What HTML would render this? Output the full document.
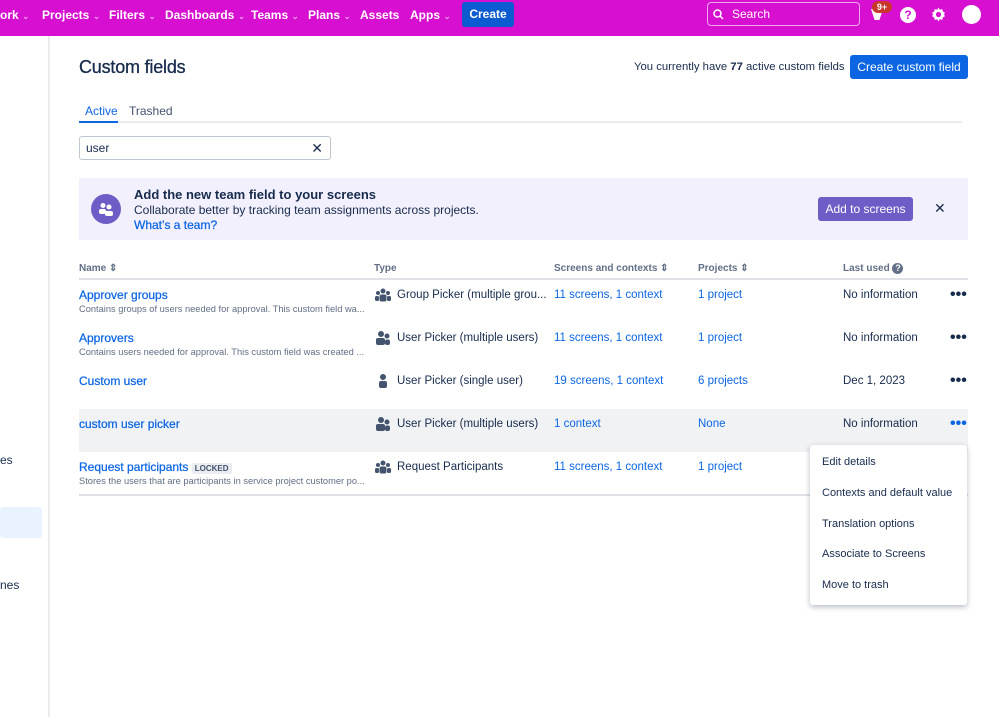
<!DOCTYPE html>
<html><head><meta charset="utf-8"><style>
*{box-sizing:border-box;margin:0;padding:0}
body{width:999px;height:717px;overflow:hidden;background:#fff;font-family:"Liberation Sans",sans-serif;color:#172b4d;font-size:12px;position:relative}
.top{position:absolute;left:0;top:0;width:999px;height:36px;background:#d60fd0}
.nav{position:absolute;top:8px;color:#fff;font-weight:bold;font-size:12px}
.nav span{font-weight:normal;font-size:9px;opacity:.8}
.ab{position:absolute}
.row{position:absolute;left:79px;width:889px;height:43px;font-size:11.5px}
.row .n{position:absolute;left:0;top:8px;color:#0c66e4;font-size:12px;-webkit-text-stroke:.25px #0c66e4}
.row .d{position:absolute;left:0;top:24px;color:#626f86;font-size:9.3px;white-space:nowrap}
.row .t{position:absolute;left:318px;top:9px}
.row .s{position:absolute;left:475px;top:9px;color:#0c66e4}
.row .p{position:absolute;left:619px;top:9px;color:#0c66e4}
.row .l{position:absolute;left:764px;top:9px}
.row .m{position:absolute;left:871px;top:6px;font-size:16px;font-weight:bold}
.ic{position:absolute;left:296px;top:8px;width:16px;height:14px}
.menu{position:absolute;left:810px;top:445px;width:157px;height:160px;background:#fff;box-shadow:0 2px 6px rgba(9,30,66,.3);border-radius:3px}
.menu div{position:absolute;left:12px;font-size:11px}
</style></head><body>
<div class="top">
<div class="nav" style="left:0">ork <span>⌄</span></div>
<div class="nav" style="left:42px">Projects <span>⌄</span></div>
<div class="nav" style="left:109px">Filters <span>⌄</span></div>
<div class="nav" style="left:165px">Dashboards <span>⌄</span></div>
<div class="nav" style="left:251px">Teams <span>⌄</span></div>
<div class="nav" style="left:308px">Plans <span>⌄</span></div>
<div class="nav" style="left:360px">Assets</div>
<div class="nav" style="left:410px">Apps <span>⌄</span></div>
<div class="ab" style="left:462px;top:2px;width:52px;height:25px;background:#0c5bd1;border-radius:3px;color:#fff;font-weight:bold;text-align:center;line-height:25px">Create</div>
<div class="ab" style="left:707px;top:2px;width:153px;height:24px;border:1.5px solid #f0a8ee;border-radius:4px;color:#fff;line-height:22px;padding-left:24px">Search</div>
<svg class="ab" style="left:713px;top:9px" width="11" height="11"><circle cx="4.5" cy="4.5" r="3.5" stroke="#fff" stroke-width="1.5" fill="none"/><path d="M7 7l3 3" stroke="#fff" stroke-width="1.5"/></svg>
<div class="ab" style="left:871px;top:9px;width:12px;height:11px;background:#fff;clip-path:polygon(0 0,100% 0,70% 100%,30% 100%)"></div>
<div class="ab" style="left:872px;top:1px;width:20px;height:12px;background:#c9372c;border-radius:6px;color:#fff;font-size:9px;font-weight:bold;text-align:center;line-height:12px">9+</div>
<div class="ab" style="left:900px;top:7px;width:16px;height:16px;border-radius:50%;background:#fff;color:#d60fd0;font-weight:bold;text-align:center;line-height:16px;font-size:12px">?</div>
<svg class="ab" style="left:930px;top:6px" width="17" height="17" viewBox="0 0 17 17"><path d="M8.5 1.5l1.3 2.2 2.5-.6.6 2.5 2.2 1.3-1.3 1.6 1.3 1.6-2.2 1.3-.6 2.5-2.5-.6-1.3 2.2-1.3-2.2-2.5.6-.6-2.5-2.2-1.3 1.3-1.6-1.3-1.6 2.2-1.3.6-2.5 2.5.6z" fill="#fff"/><circle cx="8.5" cy="8.5" r="2.6" fill="#d60fd0"/></svg>
<div class="ab" style="left:962px;top:5px;width:19px;height:19px;border-radius:50%;background:#fff"></div>
</div>
<div class="ab" style="left:48px;top:36px;width:2px;height:681px;background:#ebecf0"></div>
<div class="ab" style="left:0;top:453px">es</div>
<div class="ab" style="left:0;top:507px;width:42px;height:31px;background:#e9f2ff;border-radius:3px"></div>
<div class="ab" style="left:0;top:578px">nes</div>

<div class="ab" style="left:79px;top:57px;font-size:18px;letter-spacing:-.2px;-webkit-text-stroke:.3px #172b4d">Custom fields</div>
<div class="ab" style="left:634px;top:61px;font-size:11.3px">You currently have <b>77</b> active custom fields</div>
<div class="ab" style="left:850px;top:55px;width:118px;height:24px;background:#0c66e4;color:#fff;border-radius:3px;text-align:center;line-height:24px">Create custom field</div>
<div class="ab" style="left:85px;top:104px;color:#0c66e4">Active</div>
<div class="ab" style="left:129px;top:104px;color:#44546f">Trashed</div>
<div class="ab" style="left:79px;top:121px;width:883px;height:2px;background:#ebecf0"></div>
<div class="ab" style="left:79px;top:121px;width:39px;height:2px;background:#0c66e4"></div>
<div class="ab" style="left:79px;top:136px;width:252px;height:24px;border:1.5px solid #c1c7d0;border-radius:3px;padding-left:6px;line-height:22px">user<span style="position:absolute;right:7px;font-size:14px">✕</span></div>

<div class="ab" style="left:79px;top:178px;width:889px;height:62px;background:#f2f0fd"></div>
<div class="ab" style="left:91px;top:194px;width:30px;height:30px;border-radius:50%;background:#6e5dc6"></div>
<svg class="ab" style="left:98px;top:202px" width="16" height="14"><circle cx="5" cy="3.5" r="2.5" fill="#fff"/><circle cx="11" cy="5" r="2.5" fill="#fff"/><rect x="1" y="7" width="7" height="5" rx="2" fill="#fff"/><rect x="7" y="9" width="8" height="5" rx="2" fill="#fff"/></svg>
<div class="ab" style="left:134px;top:187px;font-size:13px;font-weight:bold">Add the new team field to your screens</div>
<div class="ab" style="left:134px;top:203px">Collaborate better by tracking team assignments across projects.</div>
<div class="ab" style="left:134px;top:218px;color:#0c66e4;-webkit-text-stroke:.25px #0c66e4">What’s a team?</div>
<div class="ab" style="left:818px;top:197px;width:95px;height:24px;background:#6e5dc6;color:#fff;border-radius:3px;text-align:center;line-height:24px">Add to screens</div>
<div class="ab" style="left:934px;top:200px;font-size:14px">✕</div>

<div class="ab" style="left:79px;top:263px;font-size:10px;font-weight:bold;color:#626f86">Name ⇕</div>
<div class="ab" style="left:374px;top:263px;font-size:10px;font-weight:bold;color:#626f86">Type</div>
<div class="ab" style="left:554px;top:263px;font-size:10px;font-weight:bold;color:#626f86">Screens and contexts ⇕</div>
<div class="ab" style="left:698px;top:263px;font-size:10px;font-weight:bold;color:#626f86">Projects ⇕</div>
<div class="ab" style="left:843px;top:263px;font-size:10px;font-weight:bold;color:#626f86">Last used <span style="display:inline-block;width:11px;height:11px;border-radius:50%;background:#626f86;color:#fff;text-align:center;font-size:9px;line-height:11px">?</span></div>
<div class="ab" style="left:79px;top:278px;width:889px;height:2px;background:#dfe1e6"></div>

<div class="row" style="top:280px"><div class="n">Approver groups</div><div class="d">Contains groups of users needed for approval. This custom field wa...</div><svg class="ic" viewBox="0 0 16 14"><circle cx="8" cy="3" r="2.5" fill="#44546f"/><circle cx="3" cy="5" r="2" fill="#44546f"/><circle cx="13" cy="5" r="2" fill="#44546f"/><rect x="4.5" y="6.5" width="7" height="7" rx="2" fill="#44546f"/><rect x="0" y="8" width="4" height="5" rx="1.5" fill="#44546f"/><rect x="12" y="8" width="4" height="5" rx="1.5" fill="#44546f"/></svg><div class="t">Group Picker (multiple grou...</div><div class="s">11 screens, 1 context</div><div class="p">1 project</div><div class="l">No information</div><div class="m">•••</div></div>
<div class="row" style="top:323px"><div class="n">Approvers</div><div class="d">Contains users needed for approval. This custom field was created ...</div><svg class="ic" viewBox="0 0 16 14"><circle cx="6" cy="3" r="3" fill="#44546f"/><circle cx="12" cy="5" r="2.5" fill="#44546f"/><rect x="1" y="7" width="9" height="7" rx="2" fill="#44546f"/><rect x="10" y="8.5" width="5" height="5.5" rx="2" fill="#44546f"/></svg><div class="t">User Picker (multiple users)</div><div class="s">11 screens, 1 context</div><div class="p">1 project</div><div class="l">No information</div><div class="m">•••</div></div>
<div class="row" style="top:366px"><div class="n">Custom user</div><svg class="ic" viewBox="0 0 16 14"><circle cx="8" cy="3" r="3" fill="#44546f"/><rect x="4" y="7" width="8" height="7" rx="2" fill="#44546f"/></svg><div class="t">User Picker (single user)</div><div class="s">19 screens, 1 context</div><div class="p">6 projects</div><div class="l">Dec 1, 2023</div><div class="m">•••</div></div>
<div class="row" style="top:409px;background:#f1f2f4"><div class="n">custom user picker</div><svg class="ic" viewBox="0 0 16 14"><circle cx="6" cy="3" r="3" fill="#44546f"/><circle cx="12" cy="5" r="2.5" fill="#44546f"/><rect x="1" y="7" width="9" height="7" rx="2" fill="#44546f"/><rect x="10" y="8.5" width="5" height="5.5" rx="2" fill="#44546f"/></svg><div class="t">User Picker (multiple users)</div><div class="s">1 context</div><div class="p">None</div><div class="l">No information</div><div class="m" style="color:#0c66e4">•••</div></div>
<div class="row" style="top:452px"><div class="n">Request participants <span style="background:#ebecf0;color:#44546f;font-size:8px;font-weight:bold;padding:1px 3px;border-radius:2px;-webkit-text-stroke:0">LOCKED</span></div><div class="d">Stores the users that are participants in service project customer po...</div><svg class="ic" viewBox="0 0 16 14"><circle cx="8" cy="3" r="2.5" fill="#44546f"/><circle cx="3" cy="5" r="2" fill="#44546f"/><circle cx="13" cy="5" r="2" fill="#44546f"/><rect x="4.5" y="6.5" width="7" height="7" rx="2" fill="#44546f"/><rect x="0" y="8" width="4" height="5" rx="1.5" fill="#44546f"/><rect x="12" y="8" width="4" height="5" rx="1.5" fill="#44546f"/></svg><div class="t">Request Participants</div><div class="s">11 screens, 1 context</div><div class="p">1 project</div></div>
<div class="ab" style="left:79px;top:494px;width:889px;height:2px;background:#dfe1e6"></div>

<div class="menu">
<div style="top:11px">Edit details</div>
<div style="top:42px">Contexts and default value</div>
<div style="top:73px">Translation options</div>
<div style="top:103px">Associate to Screens</div>
<div style="top:134px">Move to trash</div>
</div>
</body></html>
